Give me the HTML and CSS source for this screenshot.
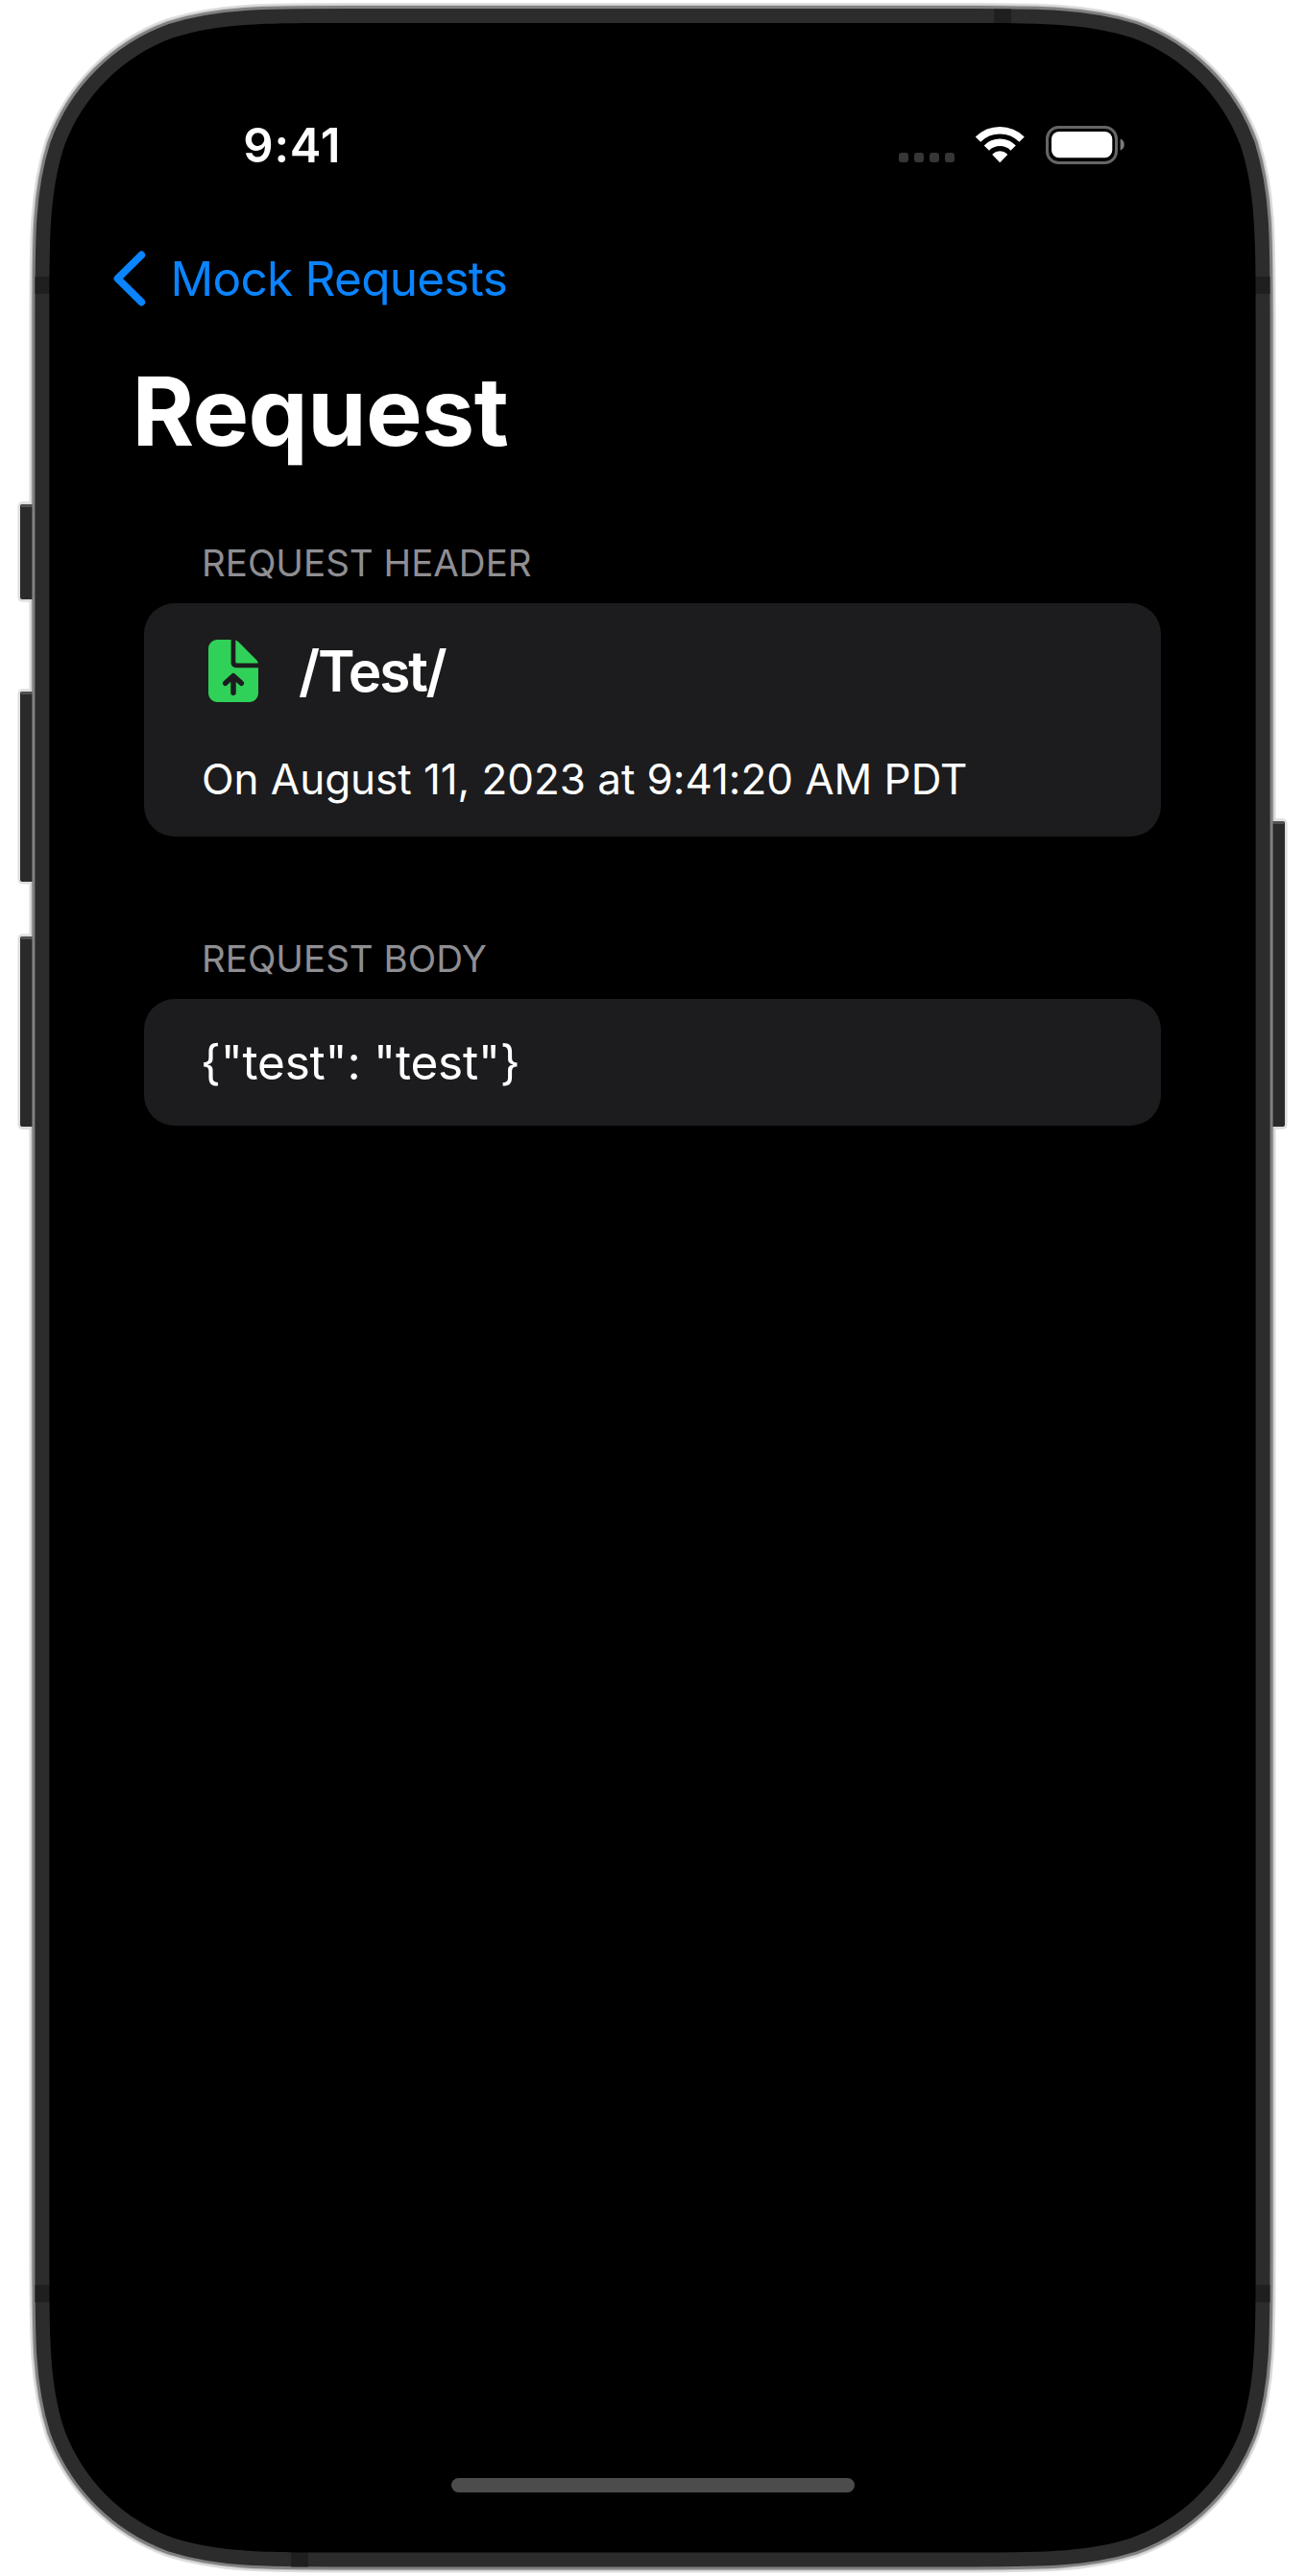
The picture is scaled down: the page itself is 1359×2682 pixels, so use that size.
FILE: index.html
```
<!DOCTYPE html>
<html lang="en">
<head>
<meta charset="utf-8">
<title>Request</title>
<link rel="stylesheet" href="styles.css">
</head>
<body>
<div class="device">
  <svg class="frame" viewBox="0 0 1359 2682" aria-hidden="true">
    <defs>
      <path id="shell" d="M363.2 24H995.8c89.7 0 134.6 0 183 15.3c52.7 19.2 94.3 60.8 113.5 113.5c15.3 48.4 15.3 93.3 15.3 183V2345.7c0 89.7 0 134.6-15.3 183c-19.2 52.7-60.8 94.3-113.5 113.5c-48.4 15.3-93.3 15.3-183 15.3H363.2c-89.7 0-134.6 0-183-15.3c-52.7-19.2-94.3-60.8-113.5-113.5c-15.3-48.4-15.3-93.3-15.3-183V335.8c0-89.7 0-134.6 15.3-183c19.2-52.7 60.8-94.3 113.5-113.5c48.4-15.3 93.3-15.3 183-15.3z"/>
    </defs>
    <g class="keys-edge">
      <rect x="18.5" y="522.3" width="24" height="104.5" rx="5"/>
      <rect x="18.5" y="717.3" width="24" height="203.2" rx="5"/>
      <rect x="18.5" y="972.3" width="24" height="203.7" rx="5"/>
      <rect x="1316" y="852.3" width="24.5" height="323.5" rx="5"/>
    </g>
    <use href="#shell" class="rim-light"/>
    <use href="#shell" class="rim-mid"/>
    <g class="keys">
      <rect x="21" y="525" width="20" height="99" rx="2"/>
      <rect x="21" y="720" width="20" height="198" rx="2"/>
      <rect x="21" y="975" width="20" height="198" rx="2"/>
      <rect x="1318" y="855" width="20" height="318" rx="2"/>
    </g>
    <g class="keys-top">
      <rect x="22" y="525" width="16" height="3"/>
      <rect x="22" y="720" width="16" height="3"/>
      <rect x="22" y="975" width="16" height="3"/>
      <rect x="1320" y="855" width="17" height="3"/>
    </g>
    <use href="#shell" class="rim-grey"/>
    <use href="#shell" class="rim-dark"/>
    <g class="bands">
      <rect x="1035" y="9.5" width="18" height="18"/>
      <rect x="303" y="2652" width="18" height="20.5"/>
      <rect x="36.5" y="288" width="18" height="18"/>
      <rect x="1304" y="288" width="18.5" height="18"/>
      <rect x="36.5" y="2379" width="18" height="18"/>
      <rect x="1304" y="2379" width="18.5" height="18"/>
    </g>
    <use href="#shell" class="glass"/>
  </svg>

  <div class="screen">
    <header class="status">
      <span class="time">9:41</span>
      <svg class="indicators" viewBox="936 130 236 42" aria-hidden="true">
        <g class="cell">
          <rect x="936" y="159" width="10" height="10" rx="3"/>
          <rect x="952" y="159" width="10" height="10" rx="3"/>
          <rect x="968" y="159" width="10" height="10" rx="3"/>
          <rect x="984" y="159" width="10" height="10" rx="3"/>
        </g>
        <g class="wifi">
          <path class="wave" d="M1018.5 145.2A32.25 32.25 0 0 1 1064.1 145.2"/>
          <path class="wave" d="M1027.4 154.1A19.7 19.7 0 0 1 1055.2 154.1"/>
          <path class="dot" d="M1041.3 168.3L1034.3 160.9A10 10 0 0 1 1048.3 160.9z"/>
        </g>
        <rect class="battery" x="1090.5" y="132.5" width="72" height="37" rx="12"/>
        <rect x="1095" y="137" width="63.3" height="27.3" rx="8" fill="#fff"/>
        <path d="M1166.7 144.500a6.6 6.6 0 0 1 0 12.2z" fill="#7a7a7a"/>
      </svg>
    </header>

    <nav class="nav">
      <svg class="chevron" viewBox="0 0 34 58" aria-hidden="true"><path d="M29.3 4.5L4.5 29L29.3 53.5"/></svg>
      <span class="back">Mock Requests</span>
    </nav>

    <h1 class="title">Request</h1>

    <section class="group">
      <h2 class="label">REQUEST HEADER</h2>
      <div class="card">
        <div class="endpoint">
          <svg class="file" viewBox="0 0 52 66" aria-hidden="true">
            <path d="M9 0H23.6V24.3a5 5 0 0 0 5 5H52V56a9 9 0 0 1-9 9H9a9 9 0 0 1-9-9V9a9 9 0 0 1 9-9z"/>
            <path d="M28.3 .4q1.7.6 3 1.9L50 21q1.4 1.4 1.9 3.4H29.8q-1.5 0-1.5-1.5z"/>
            <path class="arrow" d="M17.7 45.3L26 37.7L34.3 45.3M26 39V55.2"/>
          </svg>
          <span class="path">/Test/</span>
        </div>
        <p class="date">On August 11, 2023 at 9:41:20 AM PDT</p>
      </div>
    </section>

    <section class="group">
      <h2 class="label">REQUEST BODY</h2>
      <div class="card"><p class="payload">{"test": "test"}</p></div>
    </section>

    <div class="home"></div>
  </div>
</div>
</body>
</html>
```
FILE: styles.css
```
* { box-sizing: border-box; }
body { margin: 0; background: #fff; color: #fff; font-family: Inter, sans-serif; }
h1, h2, p { margin: 0; white-space: nowrap; }
svg { display: block; }

.device { position: relative; width: 1359px; height: 2682px; overflow: hidden; }
.frame { position: absolute; inset: 0; width: 1359px; height: 2682px; }
.rim-light { stroke: #dedede; stroke-width: 42px; }
.rim-mid { stroke: #c4c4c4; stroke-width: 38px; }
.rim-grey { stroke: #808080; stroke-width: 36px; }
.rim-dark { stroke: #2c2c2c; stroke-width: 30px; }
.keys-edge { fill: #dedede; }
.keys { fill: #2a2a2a; }
.keys-top { fill: #505050; }
.bands { fill: #1f1f1f; }
.glass { fill: #000; }

.screen {
  position: relative;
  display: flex;
  flex-direction: column;
  height: 2682px;
  padding: 122px 150px 87px;
}

.status {
  display: flex;
  justify-content: space-between;
  align-items: flex-start;
  height: 60px;
  padding: 0 37px 0 103.3px;
}
.time { font-size: 49px; font-weight: 600; line-height: 60px; letter-spacing: .8px; }
.indicators { width: 236px; height: 42px; margin-top: 8px; }
.cell { fill: #363636; }
.wave { fill: none; stroke: #fff; stroke-width: 7.5px; }
.dot { fill: #fff; stroke: #fff; stroke-width: 1.5px; stroke-linejoin: round; }
.battery { fill: none; stroke: #666; stroke-width: 3px; }

.nav { display: flex; align-items: center; gap: 26px; height: 60px; margin: 78px 0 0 -32.5px; }
.chevron { width: 34px; height: 58px; fill: none; stroke: #0a84ff; stroke-width: 7.8px; stroke-linecap: round; stroke-linejoin: round; }
.back { font-size: 49.5px; line-height: 60px; letter-spacing: -.73px; color: #0a84ff; }

.title { margin: 48px 0 0 -12.5px; font-size: 98.6px; font-weight: 700; line-height: 120px; letter-spacing: -.6px; }

.group { margin-top: 75px; }
.group + .group { margin-top: 104px; }
.label { height: 46px; margin: 0 0 19px 60px; font-size: 38.5px; font-weight: 400; line-height: 46px; color: #8e8e93; }
.card { padding: 36px 60px; background: #1c1c1e; border-radius: 32px; }

.endpoint { display: flex; align-items: center; gap: 42px; height: 70px; padding-left: 7px; }
.file { width: 52px; height: 66px; fill: #30d158; }
.arrow { fill: none; stroke: #1c1c1e; stroke-width: 5.5px; stroke-linecap: round; stroke-linejoin: round; }
.path { font-size: 58.5px; font-weight: 600; line-height: 70px; letter-spacing: -2.2px; }
.date { margin-top: 50px; height: 51px; font-size: 44px; line-height: 54px; letter-spacing: -.05px; }
.payload { margin-left: -1.2px; font-size: 49.5px; line-height: 60px; letter-spacing: -.22px; }

.home { width: 420px; height: 15px; margin: auto auto 0; border-radius: 8px; background: #4c4c4c; }
```
